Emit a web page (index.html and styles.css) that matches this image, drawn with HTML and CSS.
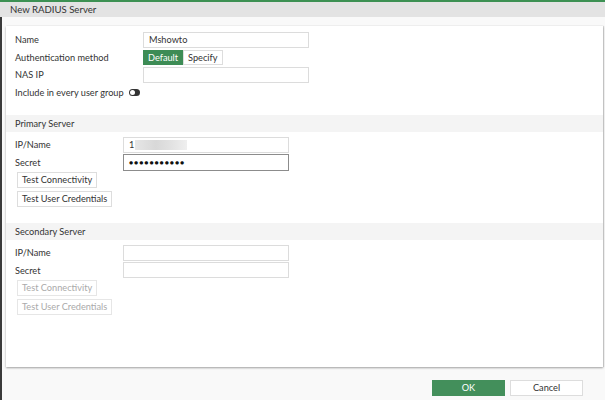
FILE: index.html
```html
<!DOCTYPE html>
<html>
<head>
<meta charset="utf-8">
<link rel="stylesheet" href="styles.css">
</head>
<body>
<div class="topline"></div>
<div class="titlebar">New RADIUS Server</div>
<div class="main">
  <div class="content">
    <div class="panel">
      <div class="form top">
        <div class="row">
          <label>Name</label>
          <div class="input wide">Mshowto</div>
        </div>
        <div class="row">
          <label>Authentication method</label>
          <div class="seg"><span class="on">Default</span><span>Specify</span></div>
        </div>
        <div class="row">
          <label>NAS IP</label>
          <div class="input wide"></div>
        </div>
        <div class="row toggle-row">
          <label>Include in every user group</label>
          <span class="toggle"><span class="knob"></span></span>
        </div>
      </div>

      <div class="section-head first">Primary Server</div>
      <div class="form sec">
        <div class="row">
          <label>IP/Name</label>
          <div class="input">1<span class="blur"></span></div>
        </div>
        <div class="row">
          <label>Secret</label>
          <div class="input focus dots">●●●●●●●●●●●</div>
        </div>
        <div class="btns">
          <span class="btn">Test Connectivity</span>
          <span class="btn">Test User Credentials</span>
        </div>
      </div>

      <div class="section-head second">Secondary Server</div>
      <div class="form sec">
        <div class="row">
          <label>IP/Name</label>
          <div class="input"></div>
        </div>
        <div class="row">
          <label>Secret</label>
          <div class="input"></div>
        </div>
        <div class="btns">
          <span class="btn disabled">Test Connectivity</span>
          <span class="btn disabled">Test User Credentials</span>
        </div>
      </div>
    </div>
    <div class="footer">
      <span class="fbtn ok">OK</span>
      <span class="fbtn cancel">Cancel</span>
    </div>
  </div>
</div>
</body>
</html>
```
FILE: styles.css
```css
* { box-sizing: border-box; }
html, body { margin: 0; padding: 0; }
body {
  width: 605px;
  height: 400px;
  overflow: hidden;
  background: #f9f9f9;
  font-family: Lato, "Liberation Sans", sans-serif;
  font-size: 9.2px;
  color: #333;
}
.topline { height: 2px; background: #3d9153; }
.titlebar {
  height: 15px;
  line-height: 15px;
  background: #e3e3e3;
  padding-left: 10px;
  font-size: 9.6px;
  color: #333;
}
.main {
  border-left: 2px solid #3a3a3a;
  height: 383px;
}
.content {
  padding: 9px 2px 0 4px;
}
.panel {
  background: #fff;
  height: 341px;
  box-shadow: 0 1px 2px rgba(0,0,0,0.35), 1px 0 1px rgba(0,0,0,0.12);
  padding-top: 5px;
}
.form { padding-left: 9px; }
.row {
  display: grid;
  align-items: center;
  height: 17.5px;
}
.top .row { grid-template-columns: 128px auto; }
.sec .row { grid-template-columns: 108px auto; }
label { color: #333; }
.input {
  width: 166px;
  height: 16px;
  border: 1px solid #dcdcdc;
  background: #fff;
  padding-left: 5px;
  line-height: 14px;
  display: flex;
  align-items: center;
}
.input.focus { border-color: #8c8c8c; height: 17px; }
.dots { font-size: 7px; letter-spacing: 0.9px; color: #111; }
.blur {
  display: inline-block;
  width: 52px;
  height: 10px;
  margin-left: 1px;
  background: linear-gradient(90deg, #e6e6e6, #d8d8d8 40%, #e2e2e2 70%, #efefef);
}
.seg { display: flex; }
.seg span {
  height: 15px;
  line-height: 13px;
  padding: 0 4px;
  border: 1px solid #ddd;
  background: #fff;
}
.seg span.on {
  background: #3d8c55;
  border-color: #3d8c55;
  color: #fff;
}
.top .toggle-row {
  height: 18px;
  grid-template-columns: max-content auto;
  column-gap: 5px;
}
.toggle {
  width: 11px;
  height: 7px;
  border-radius: 4px;
  background: #333;
  position: relative;
  display: inline-block;
}
.knob {
  position: absolute;
  left: 1px;
  top: 1px;
  width: 5px;
  height: 5px;
  border-radius: 50%;
  background: #fff;
}
.section-head {
  height: 17px;
  line-height: 17px;
  background: #f4f4f4;
  padding-left: 9px;
  color: #333;
}
.section-head.first { margin-top: 13.5px; }
.section-head.second { margin-top: 16px; }
.section-head + .form { padding-top: 4px; }
.btns {
  display: flex;
  flex-direction: column;
  align-items: flex-start;
  gap: 3px;
  padding-left: 2px;
  margin-top: 1px;
}
.btn {
  height: 16px;
  line-height: 14px;
  padding: 0 4px;
  border: 1px solid #ddd;
  background: #fff;
  color: #333;
}
.btn.disabled { color: #aaa; border-color: #e6e6e6; }
.footer {
  display: flex;
  justify-content: flex-end;
  gap: 5px;
  padding: 13px 20px 0 0;
}
.fbtn {
  width: 73px;
  height: 16px;
  line-height: 14px;
  text-align: center;
  border: 1px solid #ddd;
  background: #fff;
}
.fbtn.ok { background: #438f5b; border-color: #438f5b; color: #fff; }
```
